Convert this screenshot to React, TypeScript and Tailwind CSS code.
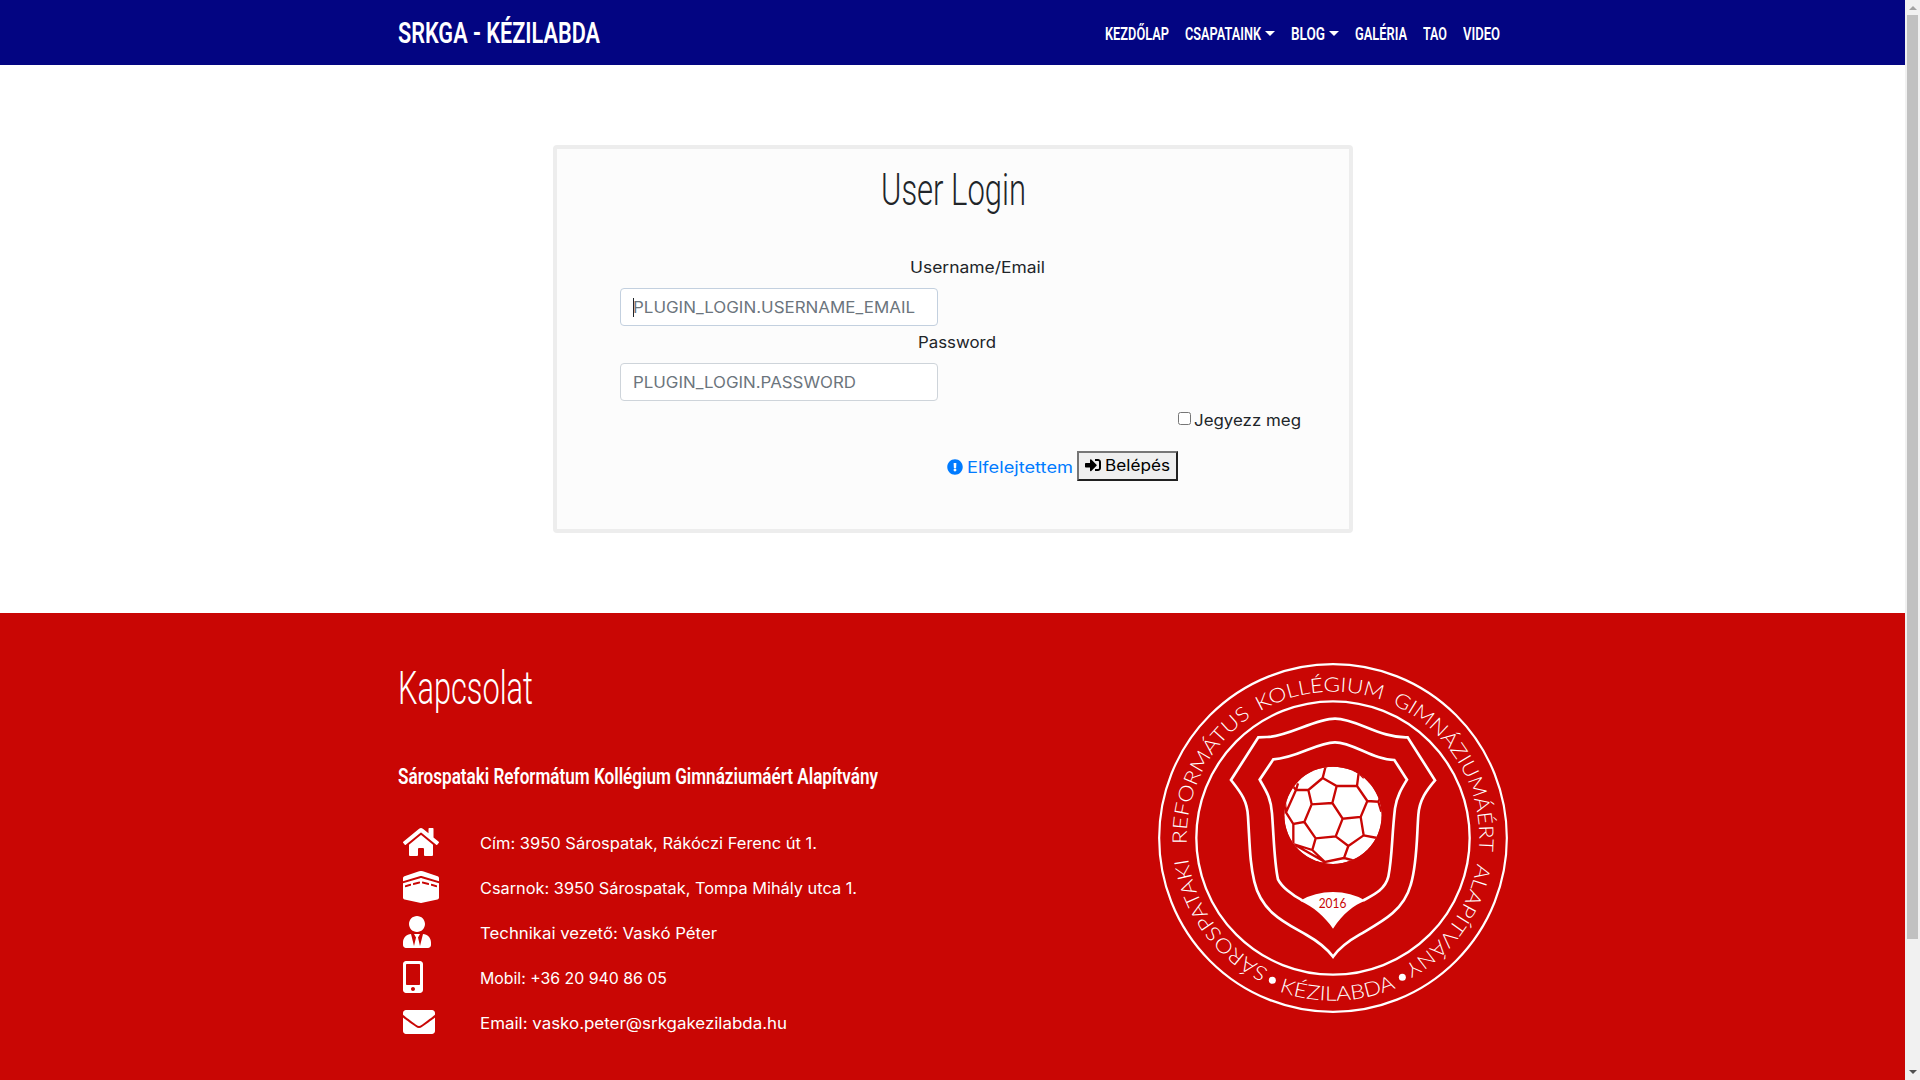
import { useLayoutEffect, useRef } from "react";
import type { ReactNode } from "react";
import {
  FaEnvelope,
  FaExclamationCircle,
  FaHome,
  FaKaaba,
  FaMobileAlt,
  FaSignInAlt,
  FaUserTie,
} from "react-icons/fa";

// Text that is stretched or squeezed horizontally to fill the width of its box.
function Fit({ className, children }: { className: string; children: ReactNode }) {
  const box = useRef<HTMLSpanElement>(null);
  const text = useRef<HTMLSpanElement>(null);
  useLayoutEffect(() => {
    if (!box.current || !text.current) return;
    text.current.style.transform = "none";
    const ratio =
      box.current.getBoundingClientRect().width / text.current.getBoundingClientRect().width;
    text.current.style.transform = `scaleX(${ratio})`;
  }, []);
  return (
    <span ref={box} className={`block shrink-0 whitespace-nowrap ${className}`}>
      <span ref={text} className="inline-block origin-left align-top">
        {children}
      </span>
    </span>
  );
}

const display = "font-['Roboto',sans-serif]";

const navItems = [
  { label: "KEZDŐLAP", width: "w-[64px]", menu: false },
  { label: "CSAPATAINK", width: "w-[76px]", menu: true },
  { label: "BLOG", width: "w-[34px]", menu: true },
  { label: "GALÉRIA", width: "w-[52px]", menu: false },
  { label: "TAO", width: "w-[24px]", menu: false },
  { label: "VIDEO", width: "w-[37px]", menu: false },
];

function Header() {
  return (
    <header className={`flex h-[65px] items-start bg-[#030582] pl-[398px] text-white ${display}`}>
      <Fit className="mt-[11px] w-[202px] text-[30px] leading-[44px] font-semibold">
        SRKGA - KÉZILABDA
      </Fit>
      <nav className="mt-[14px] ml-[505px] flex gap-4">
        {navItems.map((item) => (
          <a key={item.label} className="flex items-center">
            <Fit className={`text-[18.5px] leading-[40px] font-semibold ${item.width}`}>
              {item.label}
            </Fit>
            {item.menu && (
              <span className="mt-[-2px] ml-[4px] border-x-[5px] border-t-[5px] border-x-transparent border-t-white" />
            )}
          </a>
        ))}
      </nav>
    </header>
  );
}

function LoginCard() {
  return (
    <main className="flex h-[548px] flex-col bg-white pt-[80px] pl-[553px]">
      <form className="h-[388px] w-[800px] rounded-[4px] border-4 border-[#ededed] bg-[#fcfcfc]">
        <h1>
          <Fit
            className={`mt-[12px] ml-[324px] w-[145px] text-[45px] leading-[58px] font-[350] ${display}`}
          >
            User Login
          </Fit>
        </h1>
        <label className="mt-[37px] block">
          <Fit className="ml-[353px] w-[135px] leading-6">Username/Email</Fit>
        </label>
        <div className="mt-[8px] ml-[63px] flex h-[38px] w-[318px] items-center rounded-[4px] border border-[#c3d0df] bg-white pl-3 text-[#6c757d]">
          <span className="-mr-px h-[19px] w-px bg-[#212529]" />
          <Fit className="mt-[2px] w-[282px] leading-6">PLUGIN_LOGIN.USERNAME_EMAIL</Fit>
        </div>
        <label className="mt-[5px] block">
          <Fit className="ml-[361px] w-[78px] leading-6">Password</Fit>
        </label>
        <div className="mt-[8px] ml-[63px] flex h-[38px] w-[318px] items-center rounded-[4px] border border-[#ced4da] bg-white pl-3 text-[#6c757d]">
          <Fit className="mt-[2px] w-[223px] leading-6">PLUGIN_LOGIN.PASSWORD</Fit>
        </div>
        <label className="mt-[6px] ml-[621px] flex">
          <input
            type="checkbox"
            className="mt-[5px] h-[13px] w-[13px] rounded-[2px] border border-[#767676] bg-white"
          />
          <Fit className="mt-[2px] ml-[3px] w-[107px] leading-6">Jegyezz meg</Fit>
        </label>
        <div className="mt-[17px] ml-[390px] flex items-start pt-px">
          <a className="flex text-[#007bff]">
            <FaExclamationCircle className="mt-2 h-4 w-4" />
            <Fit className="mt-[5px] ml-[4px] w-[106px] leading-6">Elfelejtettem</Fit>
          </a>
          <button
            type="button"
            className="ml-[4px] flex h-[30px] w-[101px] items-start border-2 border-t-[#767676] border-r-[#212121] border-b-[#212121] border-l-[#767676] bg-[#efefef] pl-[6px] text-black"
          >
            <FaSignInAlt className="mt-[4px] h-4 w-4" />
            <Fit className="mt-px ml-[4px] w-[65px] text-left leading-6">Belépés</Fit>
          </button>
        </div>
      </form>
    </main>
  );
}

const contacts = [
  { icon: <FaHome className="h-8 w-9" />, text: "Cím: 3950 Sárospatak, Rákóczi Ferenc út 1.", width: "w-[337px]" },
  { icon: <FaKaaba className="h-8 w-9" />, text: "Csarnok: 3950 Sárospatak, Tompa Mihály utca 1.", width: "w-[377px]" },
  { icon: <FaUserTie className="h-8 w-7" />, text: "Technikai vezető: Vaskó Péter", width: "w-[237px]" },
  { icon: <FaMobileAlt className="h-8 w-5" />, text: "Mobil: +36 20 940 86 05", width: "w-[187px]" },
  { icon: <FaEnvelope className="h-8 w-8" />, text: "Email: vasko.peter@srkgakezilabda.hu", width: "w-[307px]" },
];

const cx = 579;
const cy = 564;

// Point on the crest's ring; the angle runs clockwise from the top.
function ringPoint(radius: number, degrees: number) {
  const a = (degrees * Math.PI) / 180;
  return `${(cx + radius * Math.sin(a)).toFixed(2)} ${(cy - radius * Math.cos(a)).toFixed(2)}`;
}

const ringWords = [
  { id: "w1", text: "SÁROSPATAKI", from: 206, to: 262, radius: 439 },
  { id: "w2", text: "REFORMÁTUS", from: 267.6, to: 326, radius: 439 },
  { id: "w3", text: "KOLLÉGIUM", from: 330, to: 379.6, radius: 439 },
  { id: "w4", text: "GIMNÁZIUMÁÉRT", from: 23.8, to: 95.2, radius: 439 },
  { id: "w5", text: "ALAPÍTVÁNY", from: 100, to: 151, radius: 439 },
  { id: "w6", text: "KÉZILABDA", from: 199.4, to: 157.2, radius: 488 },
];

function Crest() {
  return (
    <svg viewBox="51 36 1056 1056" className="h-[352px] w-[352px]" fill="none">
      <circle cx={cx} cy={cy} r="521.5" stroke="#fff" strokeWidth="6.5" />
      <circle cx={cx} cy={cy} r="410" stroke="#fff" strokeWidth="7" />
      {ringWords.map((w) => {
        const sweep = w.to > w.from ? 1 : 0;
        const length = (Math.abs(w.to - w.from) * Math.PI * w.radius) / 180;
        const end = w.to + (sweep ? 3 : -3);
        return (
          <g key={w.id}>
            <path
              id={w.id}
              d={`M${ringPoint(w.radius, w.from)} A${w.radius} ${w.radius} 0 0 ${sweep} ${ringPoint(w.radius, end)}`}
            />
            <text className="font-['Lato',sans-serif] text-[60px] font-light" fill="#fff">
              <textPath href={`#${w.id}`} textLength={length} lengthAdjust="spacingAndGlyphs">
                {w.text}
              </textPath>
            </text>
          </g>
        );
      })}
      <circle cx="397" cy="991" r="10.5" fill="#fff" />
      <circle cx="787" cy="982" r="10.5" fill="#fff" />
      <path
        d="M585 206 C525 206 440 262 380 261 L355 262 L273 390 C300 425 322 450 324 500 C330 600 330 640 343 695 C365 790 440 820 500 855 C530 872 560 895 579 920 C600 890 630 870 660 853 C720 818 790 785 812 705 C832 640 830 560 835 495 C838 450 860 420 885 391 L803 262 C720 265 650 206 585 206Z"
        stroke="#fff"
        strokeWidth="8"
      />
      <path
        d="M487 751 C455 735 425 710 414 688 C403 640 402 570 396 490 C393 445 380 425 359 389 L400 328 C470 325 530 277 585 277 C640 277 700 330 763 330 L801 389 C785 415 770 440 765 475 C755 560 757 620 745 680 C735 720 700 735 670 751"
        stroke="#fff"
        strokeWidth="8"
      />
      <path
        d="M480 752 Q525 726 579 726 Q633 726 677 752 C640 765 610 790 579 836 C555 800 520 770 480 752Z"
        fill="#fff"
      />
      <text
        x="536"
        y="773"
        textLength="83"
        lengthAdjust="spacingAndGlyphs"
        className="font-['Lato',sans-serif] text-[39px] font-normal"
        fill="#c90604"
      >
        2016
      </text>
      <clipPath id="ball">
        <circle cx="579" cy="496" r="146" />
      </clipPath>
      <g clipPath="url(#ball)">
        <circle cx="579" cy="496" r="146" fill="#fff" />
        <path
          d="M558 345 L548 384 L590 408 L651 408 L656 368 L672 384 M651 408 L682 453 L715 455 L724 436 M715 455 L724 485 M682 453 L662 501 L608 506 L577 459 L590 408 M577 459 L515 463 L505 420 L548 384 M505 420 L468 420 L438 487 L460 522 L493 516 L515 463 M468 420 L458 408 M468 420 L474 400 M438 487 L434 450 M493 516 L527 565 L587 559 L608 506 M587 559 L625 588 L671 556 L662 501 M671 556 L712 564 M625 588 L612 624 L645 633 M612 624 L555 636 L517 600 L527 565 M517 600 L460 582 L460 522 M460 582 L555 636 L540 644"
          stroke="#c90604"
          strokeWidth="7"
        />
      </g>
    </svg>
  );
}

function Footer() {
  return (
    <footer className="flex h-[467px] items-start bg-[#c90604] pl-[398px] text-white">
      <div className="w-[759px] shrink-0">
        <h2>
          <Fit
            className={`mt-[46px] w-[135px] text-[46px] leading-[58px] font-light ${display}`}
          >
            Kapcsolat
          </Fit>
        </h2>
        <h5>
          <Fit
            className={`mt-[43px] w-[480px] text-[22.5px] leading-[32px] font-semibold ${display}`}
          >
            Sárospataki Reformátum Kollégium Gimnáziumáért Alapítvány
          </Fit>
        </h5>
        <ul className="mt-[28px]">
          {contacts.map((c) => (
            <li key={c.text} className="flex h-[45px] items-start pt-[6px] pl-[5px]">
              <span className="w-[77px]">{c.icon}</span>
              <Fit className={`mt-[6px] leading-6 ${c.width}`}>{c.text}</Fit>
            </li>
          ))}
        </ul>
      </div>
      <div className="mt-[49px]">
        <Crest />
      </div>
    </footer>
  );
}

function Scrollbar() {
  return (
    <div className="flex h-[1080px] w-[15px] shrink-0 flex-col items-center bg-[#f1f1f1]">
      <span className="mt-[6px] border-x-[4px] border-b-[4px] border-x-transparent border-b-[#a3a3a3]" />
      <span className="mt-[5px] h-[924px] w-[11px] bg-[#c1c1c1]" />
      <span className="mt-[131px] border-x-[4px] border-t-[4px] border-x-transparent border-t-[#505050]" />
    </div>
  );
}

export default function App() {
  return (
    <div className="flex h-[1080px] w-[1920px] overflow-hidden font-['Inter',sans-serif] text-[15.5px] font-[370] text-[#212529]">
      <div className="w-[1905px] shrink-0">
        <Header />
        <LoginCard />
        <Footer />
      </div>
      <Scrollbar />
    </div>
  );
}
